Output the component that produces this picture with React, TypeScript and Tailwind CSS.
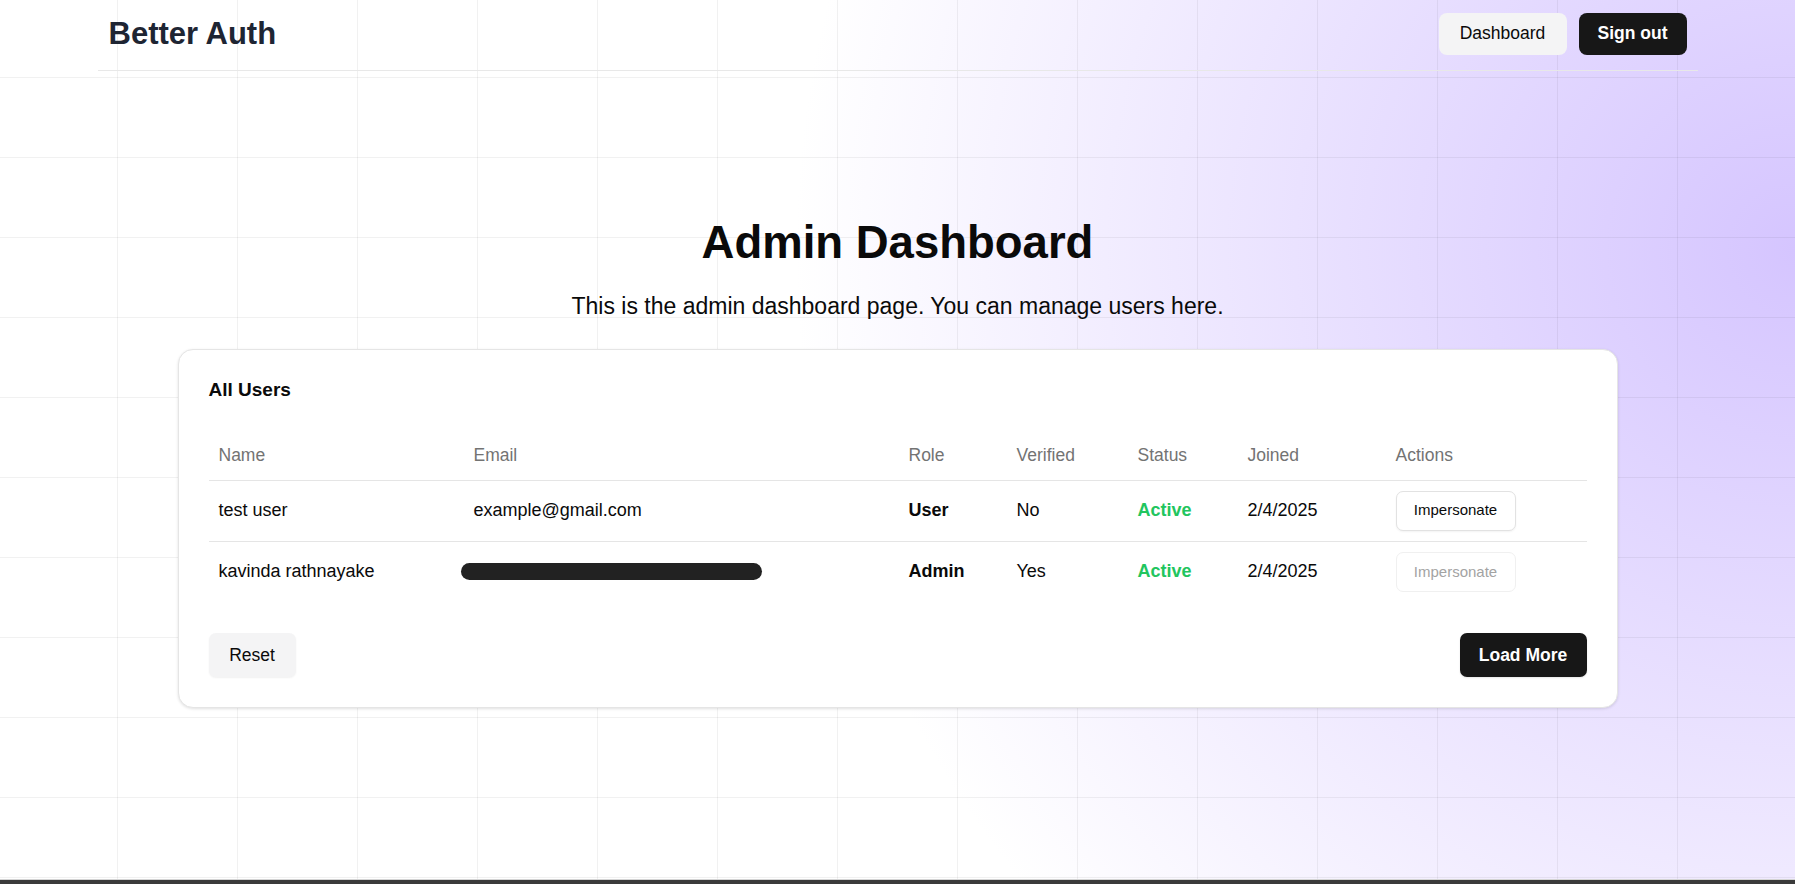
import React from "react";

const users = [
  { name: "test user", email: "example@gmail.com", role: "User", verified: "No", joined: "2/4/2025", disabled: false },
  { name: "kavinda rathnayake", email: "", role: "Admin", verified: "Yes", joined: "2/4/2025", disabled: true },
];

export default function App() {
  return (
    <div className="flex h-[884px] flex-col font-['Liberation_Sans',Arial,sans-serif] text-[#0a0a0a]">
      <div className="flex-1 bg-white bg-[linear-gradient(to_right,rgba(0,0,0,0.055)_1px,transparent_1px),linear-gradient(to_bottom,rgba(0,0,0,0.055)_1px,transparent_1px),radial-gradient(circle_1000px_at_100%_250px,#d5c5ff,transparent)] bg-[size:120px_80px,120px_80px,100%_100%] bg-[position:-3px_-3px,-3px_-3px,0_0]">
        <header className="mx-auto flex h-[71px] w-[1600px] items-center justify-between border-b border-[#e8e8e8] px-[11px] pb-[3px]">
          <div className="text-[31px] font-bold leading-none text-[#1e2533]">Better Auth</div>
          <div className="flex gap-[12px]">
            <button className="flex h-[42px] w-[128px] items-center justify-center rounded-[8px] bg-[#f4f4f5] text-[17.5px] text-[#0a0a0a]">
              Dashboard
            </button>
            <button className="flex h-[42px] w-[108px] items-center justify-center rounded-[8px] bg-[#171717] text-[17.5px] font-bold text-white">
              Sign out
            </button>
          </div>
        </header>

        <main className="flex flex-col items-center pt-[147px]">
          <h1 className="h-[50px] text-[45.5px] font-bold leading-[50px]">Admin Dashboard</h1>
          <p className="mt-[24px] h-[28px] text-[23px] leading-[28px]">
            This is the admin dashboard page. You can manage users here.
          </p>

          <div className="mt-[29px] w-[1440px] rounded-[15px] border border-[#e5e5e5] bg-white p-[30px] shadow-[0_1px_3px_rgba(0,0,0,0.12)]">
            <div className="h-[20px] text-[19px] font-bold leading-[20px]">All Users</div>
            <table className="mt-[30px] w-full table-fixed border-collapse text-[18px]">
              <colgroup>
                <col className="w-[255px]" />
                <col className="w-[435px]" />
                <col className="w-[108px]" />
                <col className="w-[121px]" />
                <col className="w-[110px]" />
                <col className="w-[148px]" />
                <col className="w-[201px]" />
              </colgroup>
              <thead>
                <tr className="h-[50px] border-b border-[#e5e5e5] text-left text-[17.5px] text-[#737373]">
                  <th className="px-[10px] font-normal">Name</th>
                  <th className="px-[10px] font-normal">Email</th>
                  <th className="px-[10px] font-normal">Role</th>
                  <th className="px-[10px] font-normal">Verified</th>
                  <th className="px-[10px] font-normal">Status</th>
                  <th className="px-[10px] font-normal">Joined</th>
                  <th className="px-[10px] font-normal">Actions</th>
                </tr>
              </thead>
              <tbody>
                {users.map((u, i) => (
                  <tr key={u.name} className={i === 0 ? "h-[61px] border-b border-[#e5e5e5]" : "h-[61px]"}>
                    <td className="px-[10px]">{u.name}</td>
                    <td className="px-[10px]">
                      {u.email ? (
                        u.email
                      ) : (
                        <div className="-ml-[13px] h-[17px] w-[301px] rounded-full bg-[#222222]" />
                      )}
                    </td>
                    <td className="px-[10px] font-bold">{u.role}</td>
                    <td className="px-[10px]">{u.verified}</td>
                    <td className="px-[10px] font-bold text-[#22c55e]">Active</td>
                    <td className="px-[10px]">{u.joined}</td>
                    <td className="px-[10px]">
                      <button
                        className={
                          u.disabled
                            ? "flex h-[40px] w-[120px] items-center justify-center rounded-[7px] border border-[#f0f0f0] bg-white text-[15px] text-[#a3a3a3]"
                            : "flex h-[40px] w-[120px] items-center justify-center rounded-[7px] border border-[#e2e2e2] bg-white text-[15px] text-[#0a0a0a] shadow-[0_1px_2px_rgba(0,0,0,0.05)]"
                        }
                      >
                        Impersonate
                      </button>
                    </td>
                  </tr>
                ))}
              </tbody>
            </table>
            <div className="mt-[31px] flex items-center justify-between">
              <button className="flex h-[44px] w-[87px] items-center justify-center rounded-[7px] bg-[#f4f4f5] text-[17.5px] shadow-[0_1px_2px_rgba(0,0,0,0.06)]">
                Reset
              </button>
              <button className="flex h-[44px] w-[127px] items-center justify-center rounded-[7px] bg-[#171717] text-[17.5px] font-bold text-white shadow-[0_1px_2px_rgba(0,0,0,0.1)]">
                Load More
              </button>
            </div>
          </div>
        </main>
      </div>
      <div className="h-[5px] border-t border-[#d4d4d4] bg-[#3a3a3a]" />
    </div>
  );
}
